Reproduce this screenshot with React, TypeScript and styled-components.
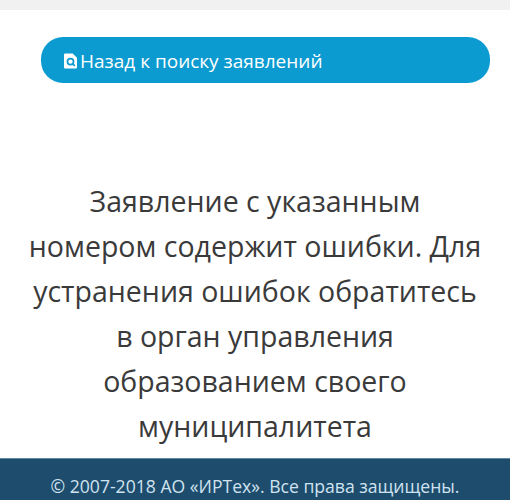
import React from "react";
import styled, { createGlobalStyle } from 'styled-components';

const GlobalStyle = createGlobalStyle`
  html, body {
    margin: 0;
    padding: 0;
    background: #fff;
    font-family: "Open Sans", "Noto Sans", sans-serif;
  }
`

const Page = styled.div`
  display: flex;
  flex-direction: column;
  width: 510px;
  height: 500px;
  overflow: hidden;
`

const TopBar = styled.div`
  height: 10px;
  background: #f1f1f1;
`

const Content = styled.div`
  flex: 1;
  padding-top: 27px;
`

const BackButton = styled.a`
  display: flex;
  align-items: center;
  gap: 3px;
  height: 46px;
  box-sizing: border-box;
  margin: 0 20px 0 41px;
  padding: 1px 23px 0;
  border-radius: 22px;
  background: #0b9bd0;
  color: #fff;
  font-size: 19px;
`

const Message = styled.div`
  margin-top: 96px;
  padding: 0 25px;
  text-align: center;
  color: #3a3a3a;
  font-size: 28.5px;
  line-height: 45px;
`

const Footer = styled.div`
  height: 42px;
  box-sizing: border-box;
  padding-top: 15px;
  background: #1d4c6d;
  border-top: 1px solid #5f87a0;
  color: #d0e3f0;
  text-align: center;
  font-size: 17.6px;
  line-height: 24px;
  white-space: nowrap;
`

const SearchDocIcon = () => (
  <svg width="13" height="16" viewBox="0 0 12 14">
    <path fill="#fff" d="M1 0h7l4 4v9a1 1 0 0 1-1 1H1a1 1 0 0 1-1-1V1a1 1 0 0 1 1-1z" />
    <circle cx="6" cy="7.5" r="2.8" fill="none" stroke="#0b9bd0" strokeWidth="1.6" />
    <path stroke="#0b9bd0" strokeWidth="1.6" d="M8 9.6l2 2" />
  </svg>
)

export default function App() {
  return (
    <Page>
      <GlobalStyle />
      <TopBar />
      <Content>
        <BackButton>
          <SearchDocIcon />
          Назад к поиску заявлений
        </BackButton>
        <Message>
          Заявление с указанным номером содержит ошибки. Для устранения ошибок обратитесь в орган управления образованием своего муниципалитета
        </Message>
      </Content>
      <Footer>© 2007-2018 АО «ИРТех». Все права защищены.</Footer>
    </Page>
  )
}
